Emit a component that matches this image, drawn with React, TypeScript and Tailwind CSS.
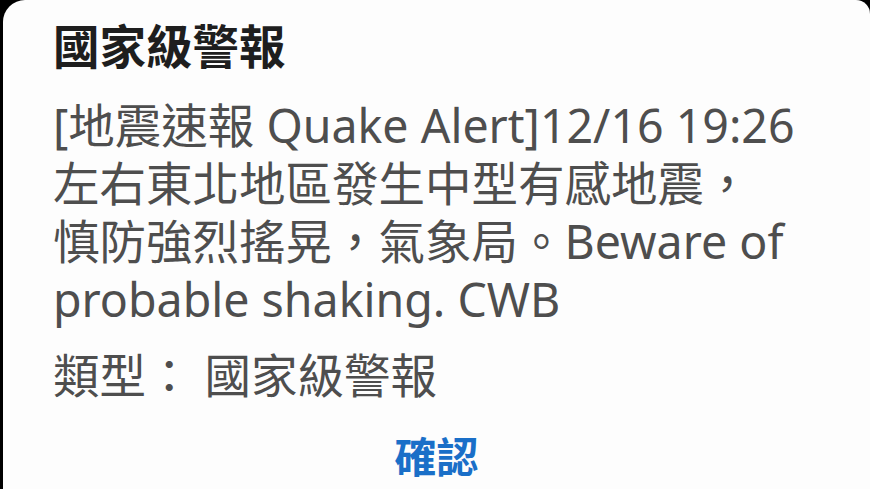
import React from "react";

export default function App() {
  const font = {
    fontFamily: '"Noto Sans", "Noto Sans CJK TC", sans-serif',
  };
  return (
    <div className="w-[870px] h-[489px] bg-black overflow-hidden">
      <div
        className="ml-[3px] w-[867px] h-[489px] bg-[#fdfdfd] rounded-tl-[22px] rounded-tr-[14px] flex flex-col"
        style={font}
      >
        <div className="pl-[50px] pt-[18px] text-[46.5px] leading-[56px] font-bold text-[#1e1e1e] whitespace-nowrap">
          國家級警報
        </div>
        <div className="pl-[50px] pt-[22px] text-[46.5px] leading-[58px] text-[#4e4e4e] whitespace-nowrap">
          <div>[地震速報 Quake Alert]12/16 19:26</div>
          <div>左右東北地區發生中型有感地震，</div>
          <div>慎防強烈搖晃，氣象局。Beware of</div>
          <div>probable shaking. CWB</div>
        </div>
        <div className="pl-[50px] pt-[18px] text-[46.5px] leading-[58px] text-[#4e4e4e] whitespace-nowrap">
          類型： 國家級警報
        </div>
        <div className="pt-[28px] flex justify-center">
          <span className="text-[42px] leading-[50px] font-bold text-[#1a6fc8]">
            確認
          </span>
        </div>
      </div>
    </div>
  );
}
